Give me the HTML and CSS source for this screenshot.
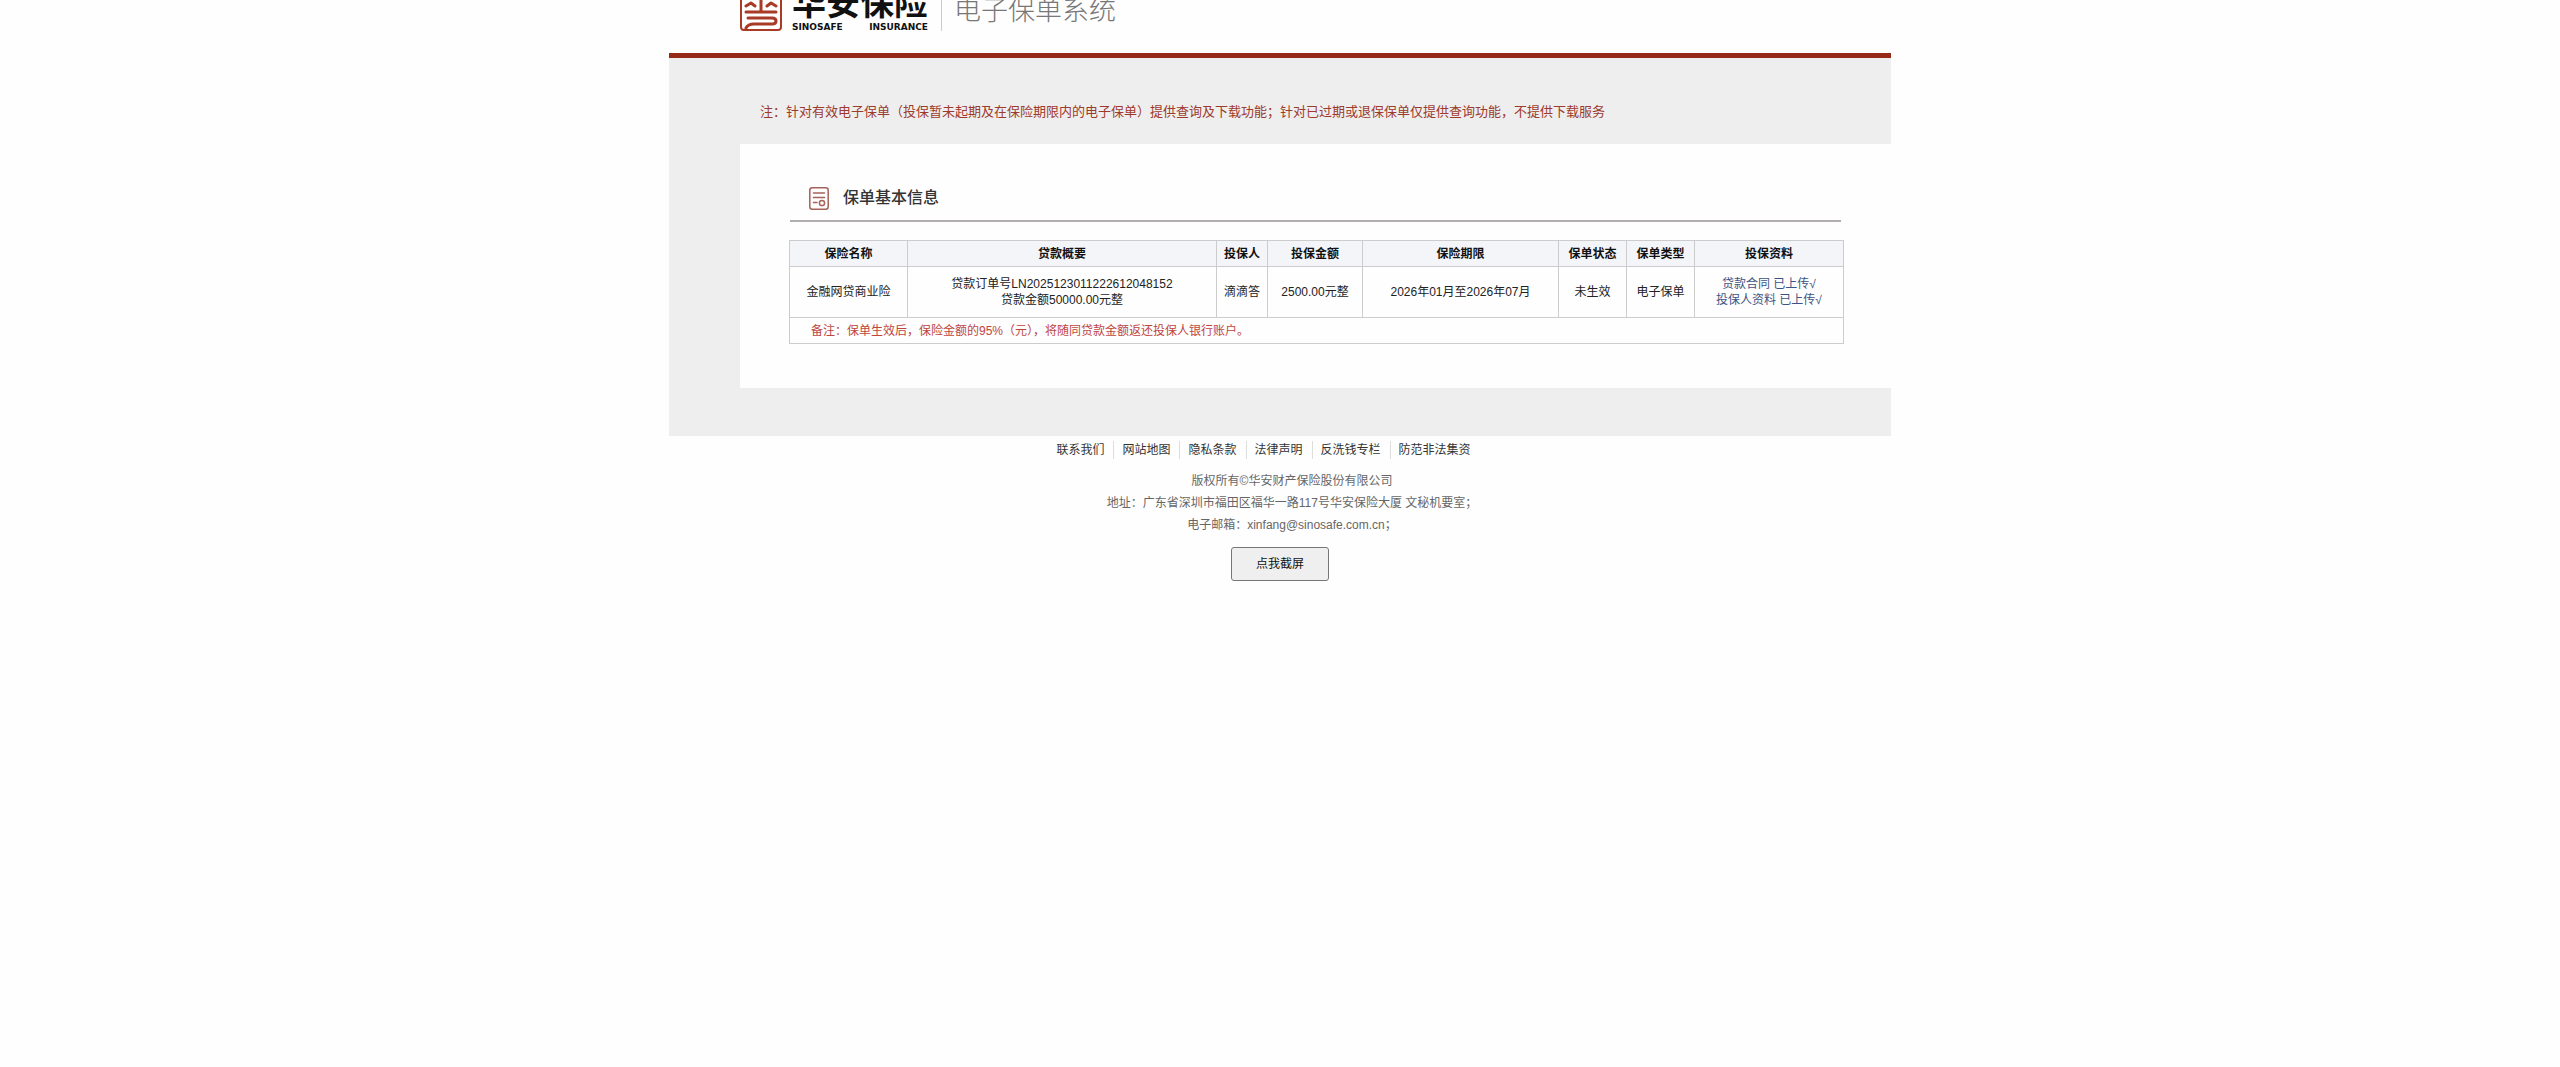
FILE: index.html
```html
<!DOCTYPE html>
<html lang="zh-CN">
<head>
<meta charset="utf-8">
<meta name="viewport" content="width=device-width, initial-scale=1">
<title>华安保险 电子保单系统</title>
<link rel="stylesheet" href="styles.css">
</head>
<body>
<div class="page">
  <header class="header">
    <svg class="seal" viewBox="0 0 42 42" fill="none" stroke="#a83a26" stroke-width="3" stroke-linecap="round" stroke-linejoin="round" aria-hidden="true">
      <rect x="1" y="1" width="40" height="40" rx="3" stroke-width="2"/>
      <path d="M21 5V23M6 23H36M6 17L11 14L15 17M27 17L31 14L36 17"/>
      <path d="M8 29H32Q36 29 36 32Q36 35 32 35H14Q8 35 6 39"/>
    </svg>
    <div class="brand">
      <strong class="brand-name">华安保险</strong>
      <span class="brand-latin"><span>SINOSAFE</span><span>INSURANCE</span></span>
    </div>
    <h1 class="system-name">电子保单系统</h1>
  </header>

  <main class="main">
    <p class="notice">注：针对有效电子保单（投保暂未起期及在保险期限内的电子保单）提供查询及下载功能；针对已过期或退保保单仅提供查询功能，不提供下载服务</p>
    <section class="panel">
      <h2 class="panel-title">
        <svg class="panel-icon" viewBox="0 0 20 23" fill="none" stroke="#a5625a" stroke-width="1.5" stroke-linecap="round" aria-hidden="true">
          <rect x="0.8" y="0.8" width="18.4" height="21.4" rx="2.5"/>
          <path d="M4.5 6H15.5M4.5 10.5H15.5M4.5 15.5H8"/>
          <circle cx="13" cy="16" r="2.6"/>
        </svg>
        保单基本信息
      </h2>
      <table class="policy">
        <colgroup>
          <col class="c-name"><col><col class="c-person"><col class="c-amount"><col class="c-period"><col class="c-short"><col class="c-short"><col class="c-files">
        </colgroup>
        <thead>
          <tr><th>保险名称</th><th>贷款概要</th><th>投保人</th><th>投保金额</th><th>保险期限</th><th>保单状态</th><th>保单类型</th><th>投保资料</th></tr>
        </thead>
        <tbody>
          <tr class="policy-row">
            <td>金融网贷商业险</td>
            <td>贷款订单号LN2025123011222612048152<br>贷款金额50000.00元整</td>
            <td>滴滴答</td>
            <td>2500.00元整</td>
            <td>2026年01月至2026年07月</td>
            <td>未生效</td>
            <td>电子保单</td>
            <td><a href="#">贷款合同 已上传√</a><br><a href="#">投保人资料 已上传√</a></td>
          </tr>
          <tr><td class="remark" colspan="8">备注：保单生效后，保险金额的95%（元），将随同贷款金额返还投保人银行账户。</td></tr>
        </tbody>
      </table>
    </section>
  </main>

  <footer class="footer">
    <nav class="links">
      <a href="#">联系我们</a><a href="#">网站地图</a><a href="#">隐私条款</a><a href="#">法律声明</a><a href="#">反洗钱专栏</a><a href="#">防范非法集资</a>
    </nav>
    <div class="legal">
      <p>版权所有©华安财产保险股份有限公司</p>
      <p>地址：广东省深圳市福田区福华一路117号华安保险大厦 文秘机要室；</p>
      <p>电子邮箱：xinfang@sinosafe.com.cn；</p>
    </div>
    <button class="capture" type="button">点我截屏</button>
  </footer>
</div>
</body>
</html>
```
FILE: styles.css
```css
* {
  box-sizing: border-box;
}

body {
  margin: 0;
  background: #fefefe;
  color: #222;
  font: 12px/16px "Liberation Sans", "Noto Sans CJK SC", sans-serif;
}

h1, h2, p {
  margin: 0;
}

a {
  color: inherit;
  text-decoration: none;
}

.page {
  max-width: 1222px;
  margin: 0 auto;
}

/* Header */
.header {
  display: flex;
  align-items: flex-end;
  height: 58px;
  padding: 0 0 22px 71px;
  border-bottom: 5px solid #952a19;
  overflow: hidden;
}

.seal {
  flex: none;
  width: 42px;
  height: 42px;
}

.brand {
  flex: none;
  width: 136px;
  margin-left: 10px;
  color: #111;
}

.brand-name {
  display: block;
  font-size: 34px;
  font-weight: 700;
  line-height: 40px;
}

.brand-latin {
  display: flex;
  justify-content: space-between;
  font: bold 9px/8px "DejaVu Sans", sans-serif;
}

.system-name {
  margin-left: 13px;
  padding-left: 12px;
  border-left: 1px solid #ccc;
  color: #777;
  font-size: 27px;
  font-weight: 300;
  line-height: 40px;
}

/* Content */
.main {
  padding-bottom: 48px;
  background: #efeeef;
}

.notice {
  padding: 44px 24px 22px 91px;
  color: #9c3a2c;
  font-size: 13px;
  line-height: 20px;
}

.panel {
  margin-left: 71px;
  padding: 32px 47px 44px 49px;
  background: #fefefe;
}

.panel-title {
  display: flex;
  align-items: center;
  gap: 14px;
  height: 46px;
  margin: 0 3px 18px 1px;
  padding-left: 19px;
  border-bottom: 2px solid #b3aeae;
  color: #333;
  font-size: 16px;
  font-weight: 500;
}

.panel-icon {
  width: 20px;
  height: 23px;
}

.policy {
  width: 100%;
  border-collapse: collapse;
  table-layout: fixed;
  text-align: center;
}

.policy th,
.policy td {
  height: 26px;
  padding: 0;
  border: 1px solid #ccc;
}

.policy th {
  background: #f4f5f9;
  color: #111;
}

.policy .policy-row td {
  height: 51px;
}

.policy a {
  color: #3a5485;
}

.policy .remark {
  padding-left: 21px;
  color: #c0453d;
  text-align: left;
}

.c-name { width: 118px; }
.c-person { width: 51px; }
.c-amount { width: 95px; }
.c-period { width: 196px; }
.c-short { width: 68px; }
.c-files { width: 149px; }

/* Footer */
.footer {
  display: flex;
  flex-direction: column;
  align-items: center;
  padding-top: 5px;
}

.links {
  display: flex;
  margin-right: 32px;
  color: #333;
  line-height: 18px;
}

.links a {
  padding: 0 9px 0 8px;
}

.links a + a {
  border-left: 1px solid #ddd;
}

.legal {
  margin: 11px 0 0 24px;
  color: #666;
  line-height: 22px;
  text-align: center;
}

.capture {
  width: 98px;
  height: 34px;
  margin-top: 11px;
  border: 1px solid #767676;
  border-radius: 3px;
  background: #efefef;
  color: #111;
  font: inherit;
}
```
